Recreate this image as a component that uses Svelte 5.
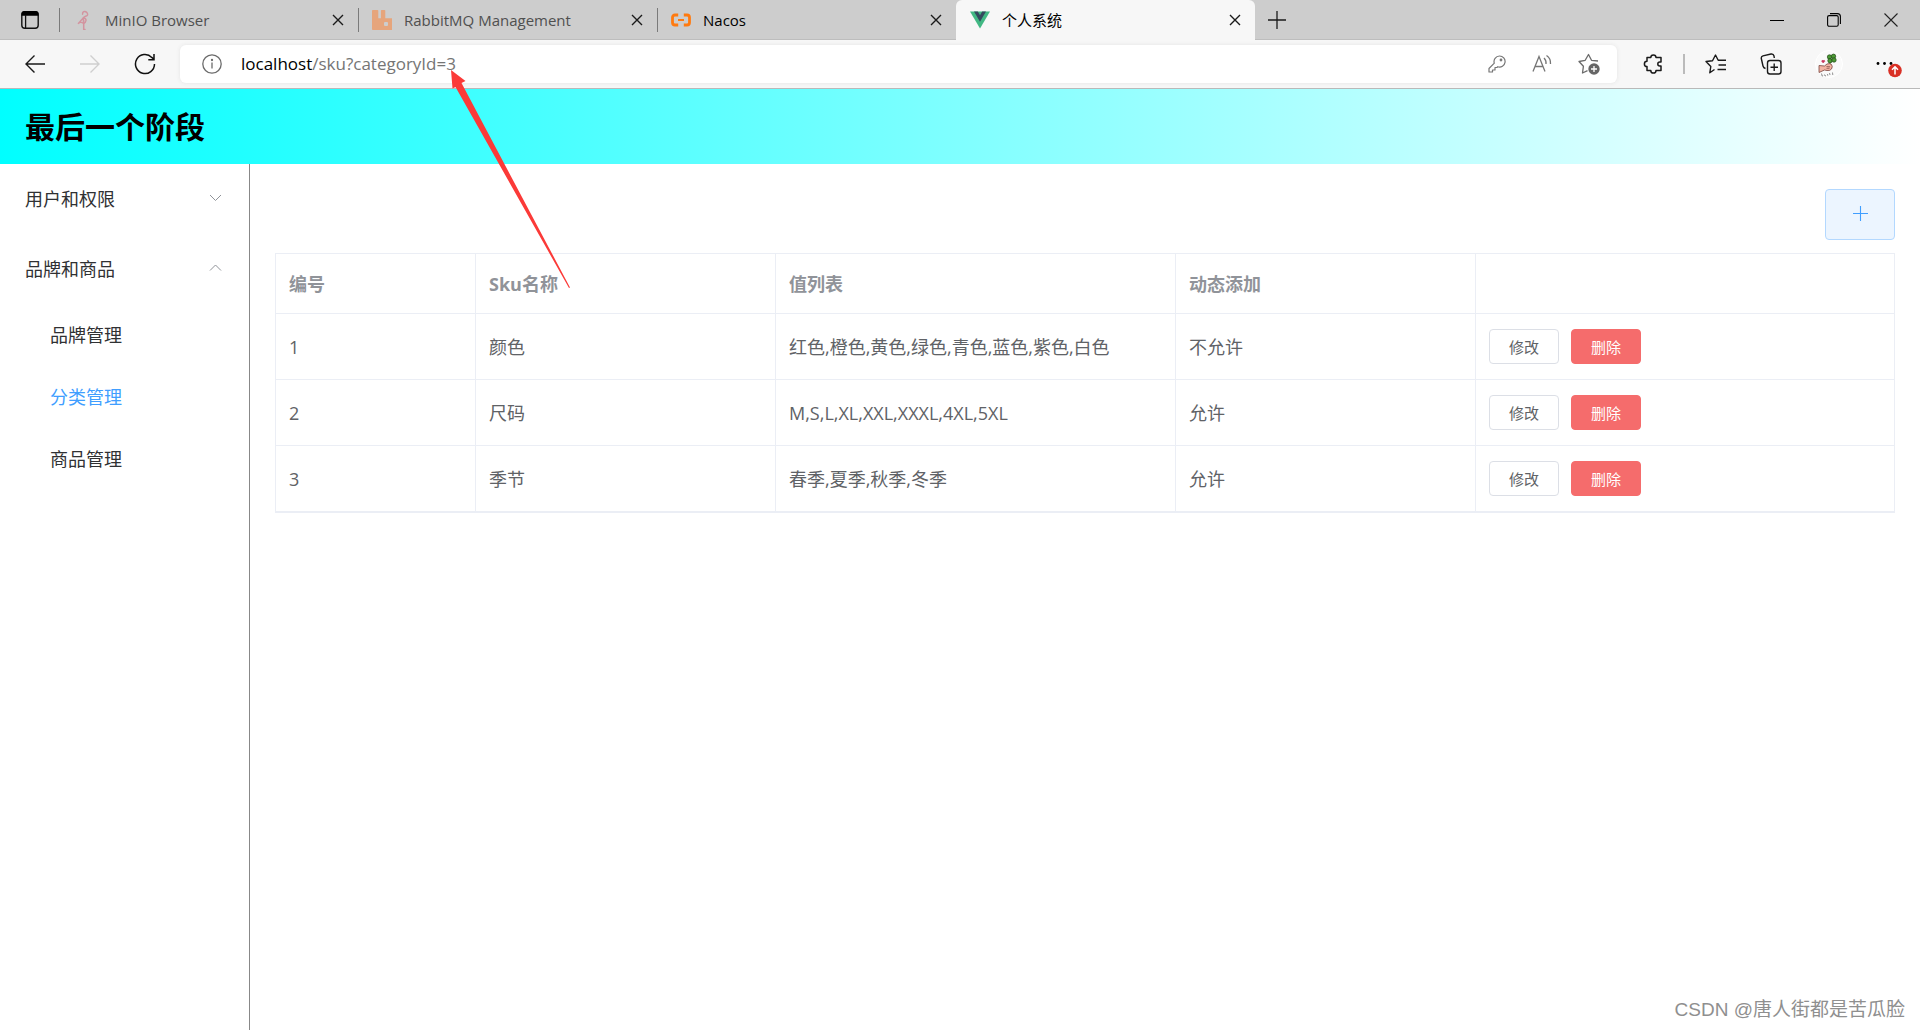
<script>
  const tabs = [
    { title: 'MinIO Browser', icon: 'minio', dim: true, active: false },
    { title: 'RabbitMQ Management', icon: 'rabbit', dim: true, active: false },
    { title: 'Nacos', icon: 'nacos', dim: false, active: false },
    { title: '个人系统', icon: 'vue', dim: false, active: true }
  ]

  let path = '/sku?categoryId=3'

  let menus = [
    { name: '用户和权限', open: false, items: ['用户管理', '权限管理'] },
    { name: '品牌和商品', open: true, items: ['品牌管理', '分类管理', '商品管理'] }
  ]
  let current = '分类管理'

  let skus = [
    { id: 1, name: '颜色', values: '红色,橙色,黄色,绿色,青色,蓝色,紫色,白色', dynamic: false },
    { id: 2, name: '尺码', values: 'M,S,L,XL,XXL,XXXL,4XL,5XL', dynamic: true },
    { id: 3, name: '季节', values: '春季,夏季,秋季,冬季', dynamic: true }
  ]

  function toggle(menu) {
    menu.open = !menu.open
    menus = menus
  }

  function remove(sku) {
    skus = skus.filter(s => s.id !== sku.id)
  }
</script>

<div class="window">
  <div class="tabs">
    <button class="workspace" aria-label="Tab actions">
      <svg width="20" height="20" viewBox="0 0 20 20">
        <rect x="1.8" y="1.8" width="16.4" height="16.4" rx="3" fill="none" stroke="#111" stroke-width="1.4" />
        <path d="M1.5 5.8V4a3 3 0 0 1 3-3h11a3 3 0 0 1 3 3v1.8z" fill="#000" />
        <path d="M5.6 5v13" stroke="#111" stroke-width="1.3" />
      </svg>
    </button>
    {#each tabs as tab}
      <div class="tab" class:active={tab.active} class:dim={tab.dim}>
        <svg class="favicon" width="20" height="20" viewBox="0 0 20 20">
          {#if tab.icon === 'minio'}
            <g fill="none" stroke="#d3949f" stroke-linecap="round" stroke-linejoin="round">
              <path d="M9.6 4.2C9.4 2.3 10.6 1.2 12 1.5c1.8.4 3 2 2.500 3.500C13.900 6.500 10.500 6.200 10.200 8.300c1.600-.2 3 .6 2.800 2.200-.2 1.500-1.200 2.500-2.500 3" stroke-width="1.500" />
              <path d="M5.300 13.500L10.200 8l.3 5.200-3-1z" stroke-width="1.300" />
              <path d="M10.700 10.500v9M10.700 19.500h1.300" stroke-width="1.500" />
            </g>
          {:else if tab.icon === 'rabbit'}
            <path d="M0 .8Q0 0 .8 0h4.700q.8 0 .8.800v7.400h2.600V.8q0-.8.800-.8h2.800q.8 0 .8.800v7.400h6.700q.8 0 .8.800v10.200q0 .8-.8.800H.8Q0 20 0 19.200z" fill="#e6a57c" />
            <rect x="12" y="12" width="4" height="4" rx="1" fill="#cdcdcd" />
          {:else if tab.icon === 'nacos'}
            <g fill="none" stroke="#ff7a0f">
              <path d="M7.200 5H4Q1.500 5 1.500 7.500v5q0 2.500 2.500 2.500h3.200M12.800 5H16q2.500 0 2.500 2.500v5q0 2.500-2.500 2.500h-3.200" stroke-width="2.800" />
              <path d="M7 10h6" stroke-width="2" />
            </g>
          {:else}
            <path d="M0 1.500h20L10 18.500z" fill="#41b883" />
            <path d="M4 1.500h3.800L10 5.200l2.200-3.700H16L10 11.800z" fill="#35495e" />
          {/if}
        </svg>
        <span class="title">{tab.title}</span>
        <button class="close" aria-label="Close tab">
          <svg width="12" height="12" viewBox="0 0 12 12"><path d="M1 1l10 10M11 1L1 11" stroke="#1a1a1a" stroke-width="1.4" /></svg>
        </button>
      </div>
    {/each}
    <button class="newtab" aria-label="New tab">
      <svg width="18" height="18" viewBox="0 0 18 18"><path d="M9 0v18M0 9h18" stroke="#1a1a1a" stroke-width="1.3" /></svg>
    </button>
    <div class="controls">
      <button aria-label="Minimize">
        <svg width="14" height="14" viewBox="0 0 14 14"><path d="M0 7.500h14" stroke="#000" /></svg>
      </button>
      <button aria-label="Restore">
        <svg width="14" height="14" viewBox="0 0 14 14" fill="none" stroke="#000" stroke-width="1.1">
          <rect x=".6" y="2.6" width="10.6" height="10.6" rx="1.5" />
          <path d="M3 .6h7.400a3 3 0 0 1 3 3V11" />
        </svg>
      </button>
      <button aria-label="Close window">
        <svg width="14" height="14" viewBox="0 0 14 14"><path d="M.5.5l13 13M13.500.5l-13 13" stroke="#222" stroke-width="1.1" /></svg>
      </button>
    </div>
  </div>

  <div class="toolbar">
    <div class="nav">
      <button aria-label="Back">
        <svg width="22" height="20" viewBox="0 0 22 20" fill="none" stroke="#1a1a1a" stroke-width="1.4"><path d="M21 10H2M10.500 1.500L2 10l8.500 8.500" /></svg>
      </button>
      <button aria-label="Forward" disabled>
        <svg width="22" height="20" viewBox="0 0 22 20" fill="none" stroke="#cfcfcf" stroke-width="1.4"><path d="M1 10h19M11.500 1.500L20 10l-8.500 8.500" /></svg>
      </button>
      <button aria-label="Refresh">
        <svg width="22" height="22" viewBox="0 0 22 22" fill="none" stroke="#111" stroke-width="1.5"><path d="M20.500 11A9.500 9.500 0 1 1 17.800 4.400L20 6.500M20 1v5.700h-5.700" /></svg>
      </button>
    </div>
    <div class="address">
      <svg width="20" height="20" viewBox="0 0 20 20" fill="none" stroke="#6b6b6b" stroke-width="1.3">
        <circle cx="10" cy="10" r="9.2" />
        <path d="M10 8.500v6" />
        <circle cx="10" cy="6" r=".5" fill="#6b6b6b" />
      </svg>
      <div class="url"><span class="host">localhost</span>{path}</div>
      <button aria-label="Saved passwords">
        <svg width="18" height="18" viewBox="0 0 18 18" fill="none" stroke="#767676" stroke-width="1.2" stroke-linejoin="round">
          <path d="M11.500 1a5.500 5.500 0 0 0-5.200 7.200L1 13.500V17h3.500v-2H7v-2.500h2l.8-.8A5.500 5.500 0 1 0 11.500 1z" />
          <circle cx="13" cy="5" r=".8" />
        </svg>
      </button>
      <button aria-label="Read aloud">
        <svg width="20" height="20" viewBox="0 0 20 20" fill="none" stroke="#767676" stroke-width="1.3">
          <path d="M1 17.500L7 2.500l6 15M3 12.500h8M12 4q2.500 2.500 2 6M14.500 1.500q4.500 3 4 8.500" />
        </svg>
      </button>
      <button aria-label="Add to favorites">
        <svg width="22" height="22" viewBox="0 0 22 22">
          <path d="M9.500 17.700L4.500 20l.9-6.700L1 8.500l6.200-1.200L10.500 1.500l3 5.800 6.500.7" fill="none" stroke="#6b6b6b" stroke-width="1.3" stroke-linejoin="round" />
          <circle cx="16" cy="16" r="5.7" fill="#666" />
          <path d="M16 13v6M13 16h6" stroke="#fff" stroke-width="1.3" />
        </svg>
      </button>
    </div>
    <div class="tools">
      <button aria-label="Extensions">
        <svg width="20" height="20" viewBox="0 0 20 20" fill="none" stroke="#1a1a1a" stroke-width="1.5" stroke-linejoin="round">
          <path d="M4 3.500h3.800a2.600 2.600 0 0 1 5.200 0H18V8h-1.200a2 2 0 0 0 0 4H18v4.500h-5a2.600 2.600 0 0 1-5.200 0H4v-4a2.600 2.600 0 0 1 0-5.200z" />
        </svg>
      </button>
      <span class="divider"></span>
      <button aria-label="Favorites">
        <svg width="22" height="20" viewBox="0 0 22 20" fill="none" stroke="#1a1a1a" stroke-width="1.4" stroke-linejoin="round">
          <path d="M9.500 15.500L4.800 18.800l1-6.300L1 7.500l6.500-.7L10.500 1l2.700 5.300H21M13.500 11H21M12.500 15.500H21" />
        </svg>
      </button>
      <button aria-label="Collections">
        <svg width="22" height="22" viewBox="0 0 22 22" fill="none" stroke="#1a1a1a" stroke-width="1.4">
          <rect x="7.5" y="7.5" width="13.5" height="13.5" rx="2.5" />
          <path d="M14.200 10.500v7.500M10.500 14.200H18M5.500 15.500q-2-.5-2.500-2.500L1.300 5.500q-.3-2 1.700-2.700L11 1q2.500-.3 3 2l.3 2" />
        </svg>
      </button>
      <button aria-label="Profile">
        <svg width="28" height="28" viewBox="0 0 28 28">
          <circle cx="14" cy="14" r="13.5" fill="#fafafa" stroke="#fff" />
          <path d="M16.500 9.500q-1 3-2.500 6" fill="none" stroke="#2c5b1f" />
          <g fill="#4c9a35" stroke="#234a18" stroke-width=".7">
            <circle cx="14.5" cy="7" r="2.2" />
            <circle cx="18.5" cy="6.3" r="2.2" />
            <circle cx="15" cy="10.700" r="2.200" />
            <circle cx="19" cy="10" r="2.200" />
          </g>
          <path d="M4 15.500l5.500.5 2.500-2q3-1 4.500.5 1.500 2 0 4.500-1.500 2-4.500 1.500L9.500 20 4 22.500z" fill="#f2b3a3" stroke="#7a4640" stroke-width=".8" />
          <path d="M11.500 16.500l3.500.3M11.500 18.300h3" stroke="#7a4640" stroke-width=".7" />
          <path d="M8.200 13L6.700 11.300q0-1.300 1.500-.8 1.600-.6 1.600.8z" fill="#c9365c" stroke="#c9365c" stroke-width=".6" />
          <path d="M6.500 23.500l.6 2.500 1-.2M9.500 24.500l.5 1.500 1-.3M12.500 24l.3 1.700M14.500 23l.5 2M17.500 22.500l.3 2.500" fill="none" stroke="#777" stroke-width=".8" />
        </svg>
      </button>
      <button aria-label="Settings and more">
        <svg width="26" height="28" viewBox="0 0 26 28">
          <circle cx="2" cy="13.5" r="1.4" />
          <circle cx="8.5" cy="13.5" r="1.4" />
          <circle cx="15" cy="13.5" r="1.4" />
          <circle cx="19" cy="20.5" r="6.8" fill="#d93025" />
          <path d="M19 24.500v-7.500M16 19.800l3-3 3 3" fill="none" stroke="#fff" stroke-width="1.5" />
        </svg>
      </button>
    </div>
  </div>

  <header>
    <h1>最后一个阶段</h1>
  </header>

  <div class="body">
    <nav class="side">
      {#each menus as menu}
        <button class="submenu" on:click={() => toggle(menu)}>
          {menu.name}
          <svg width="13" height="10" viewBox="0 0 13 10" fill="none" stroke="#909399">
            <path d={menu.open ? 'M1 6.5L6.5 1 12 6.5' : 'M1 1l5.5 5.5L12 1'} />
          </svg>
        </button>
        {#if menu.open}
          <div class="items">
            {#each menu.items as item}
              <a href="#{item}" class:current={item === current}>{item}</a>
            {/each}
          </div>
        {/if}
      {/each}
    </nav>

    <main>
      <div class="actions">
        <button class="add" aria-label="添加">
          <svg width="16" height="18" viewBox="0 0 16 18"><path d="M8.500 0v15M1 7.500h15" stroke="#409eff" stroke-width="1.1" /></svg>
        </button>
      </div>
      <table>
        <colgroup>
          <col class="col-id" />
          <col class="col-name" />
          <col class="col-values" />
          <col class="col-dynamic" />
          <col />
        </colgroup>
        <thead>
          <tr>
            <th>编号</th>
            <th>Sku名称</th>
            <th>值列表</th>
            <th>动态添加</th>
            <th></th>
          </tr>
        </thead>
        <tbody>
          {#each skus as sku (sku.id)}
            <tr>
              <td>{sku.id}</td>
              <td>{sku.name}</td>
              <td>{sku.values}</td>
              <td>{sku.dynamic ? '允许' : '不允许'}</td>
              <td>
                <div class="ops">
                  <button class="op">修改</button>
                  <button class="op danger" on:click={() => remove(sku)}>删除</button>
                </div>
              </td>
            </tr>
          {/each}
        </tbody>
      </table>
    </main>
  </div>

  <svg class="arrow" width="122" height="220" viewBox="0 0 122 220">
    <path d="M1 0l14.500 11-4 2L120 217.500l-1 .5L5.500 17l-3 1.500z" fill="#fb3a38" />
  </svg>
  <div class="watermark">CSDN @唐人街都是苦瓜脸</div>
</div>

<style>
  :global(body) {
    margin: 0;
    background: white;
  }

  .window {
    position: relative;
    display: flex;
    flex-direction: column;
    min-height: 100vh;
    font-family: "Open Sans", "Noto Sans CJK SC", sans-serif;
    font-size: 18px;
    line-height: 24px;
    color: #303133;
  }

  button {
    margin: 0;
    padding: 0;
    border: none;
    background: none;
    font: inherit;
    color: inherit;
    cursor: pointer;
  }

  svg {
    display: block;
    flex: none;
  }

  .tabs {
    display: flex;
    height: 40px;
    background: #cdcdcd;
    box-shadow: inset 0 -1px #bdbdbd;
  }

  .workspace {
    display: flex;
    align-items: center;
    padding: 0 19px 0 20px;
  }

  .tab {
    display: flex;
    align-items: center;
    box-sizing: border-box;
    flex: 0 1 299px;
    height: 40px;
    padding: 0 14px;
    font-size: 15px;
    color: #000;
    background: linear-gradient(#7a7a7a, #7a7a7a) 0 8px / 1px 24px no-repeat;
  }

  .tab.dim {
    color: #505050;
  }

  .tab.active {
    background: #f7f7f7;
    border-radius: 6px 6px 0 0;
  }

  .title {
    flex: 1;
    padding-left: 12px;
    white-space: nowrap;
    overflow: hidden;
  }

  .newtab {
    padding: 0 13px;
  }

  .controls {
    display: flex;
    margin-left: auto;
    padding-right: 1px;
  }

  .controls button {
    display: flex;
    align-items: center;
    justify-content: center;
    width: 57px;
  }

  .toolbar {
    display: flex;
    align-items: center;
    box-sizing: border-box;
    height: 49px;
    background: #f7f7f7;
    border-bottom: 1px solid #b9b9b9;
  }

  .nav {
    display: flex;
    align-items: center;
    gap: 33px;
    padding: 0 24px;
  }

  .address {
    display: flex;
    align-items: center;
    flex: 1;
    height: 38px;
    padding: 0 17px 0 22px;
    gap: 26px;
    background: white;
    border-radius: 6px;
    box-shadow: 0 0 4px #e4e4e4;
  }

  .url {
    flex: 1;
    margin-left: -7px;
    font-size: 17px;
    color: #757575;
  }

  .host {
    color: #000;
  }

  .tools {
    display: flex;
    align-items: center;
    gap: 33px;
    padding: 0 18px 0 26px;
  }

  .divider {
    width: 2px;
    height: 20px;
    margin: 0 -13px;
    background: #bbb;
  }

  header {
    display: flex;
    align-items: center;
    height: 75px;
    padding: 0 25px;
    background: linear-gradient(to right, #00ffff, #ffffff);
  }

  h1 {
    margin: 0;
    font-size: 30px;
    line-height: 40px;
    font-weight: bold;
    color: #000;
  }

  .body {
    display: flex;
    flex: 1;
  }

  .side {
    box-sizing: border-box;
    flex: none;
    width: 250px;
    border-right: 1px solid #888;
  }

  .submenu {
    display: flex;
    align-items: center;
    justify-content: space-between;
    width: 100%;
    height: 70px;
    padding: 0 27px 0 25px;
  }

  .items a {
    display: flex;
    align-items: center;
    height: 62px;
    padding-left: 50px;
    color: #303133;
    text-decoration: none;
  }

  .items a.current {
    color: #409eff;
  }

  main {
    flex: 1;
    min-width: 0;
    padding: 25px;
  }

  .actions {
    display: flex;
    justify-content: flex-end;
    padding-bottom: 13px;
  }

  .add {
    display: flex;
    align-items: center;
    justify-content: center;
    box-sizing: border-box;
    width: 70px;
    height: 51px;
    background: #ecf5ff;
    border: 1px solid #b3d8ff;
    border-radius: 4px;
  }

  table {
    width: 100%;
    table-layout: fixed;
    border-collapse: separate;
    border-spacing: 0;
    border: 1px solid #ebeef5;
    border-right: none;
    color: #606266;
  }

  .col-id {
    width: 200px;
  }

  .col-name,
  .col-dynamic {
    width: 300px;
  }

  .col-values {
    width: 400px;
  }

  th,
  td {
    box-sizing: border-box;
    height: 66px;
    padding: 0 13px;
    text-align: left;
    border-right: 1px solid #ebeef5;
    border-bottom: 1px solid #ebeef5;
  }

  th {
    height: 60px;
    color: #909399;
  }

  .ops {
    display: flex;
    gap: 12px;
  }

  .op {
    box-sizing: border-box;
    width: 70px;
    height: 35px;
    font-size: 15px;
    background: white;
    border: 1px solid #dcdfe6;
    border-radius: 4px;
  }

  .danger {
    color: white;
    background: #f56c6c;
    border-color: #f56c6c;
  }

  .arrow {
    position: absolute;
    left: 450px;
    top: 70px;
    pointer-events: none;
  }

  .watermark {
    position: absolute;
    right: 15px;
    bottom: 8px;
    font-family: "Liberation Sans", "Noto Sans CJK SC", sans-serif;
    font-size: 19px;
    color: #8f8f8f;
  }
</style>
